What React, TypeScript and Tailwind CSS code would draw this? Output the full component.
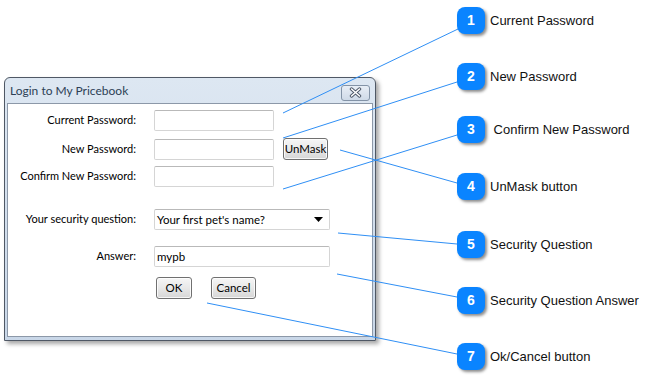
import type { ReactNode } from "react";

const UI = "font-['Lato','Noto_Sans',sans-serif]";

const callouts = [
  { n: 1, text: "Current Password", mt: "mt-[7px]" },
  { n: 2, text: "New Password", mt: "mt-[29px]" },
  { n: 3, text: " Confirm New Password", mt: "mt-[26px]" },
  { n: 4, text: "UnMask button", mt: "mt-[30px]" },
  { n: 5, text: "Security Question", mt: "mt-[31px]" },
  { n: 6, text: "Security Question Answer", mt: "mt-[29px]" },
  { n: 7, text: "Ok/Cancel button", mt: "mt-[29px]" },
];

// leader lines: [x1, y1, x2, y2]
const lines = [
  [283, 113, 458, 29],
  [283, 138, 457, 82],
  [283, 189, 457, 135],
  [340, 150, 457, 183],
  [338, 233, 457, 244],
  [337, 274, 457, 297],
  [207, 303, 457, 354],
];

function Field({ w = "w-[120px]", children }: { w?: string; children?: ReactNode }) {
  return (
    <div
      className={`${w} flex h-[21px] items-center rounded-[2px] border border-[#d5d5d5] border-t-[#b9b9b9] bg-white px-[2px] text-[11.5px] text-black`}
    >
      {children}
    </div>
  );
}

function WinButton({ w, children }: { w: string; children: ReactNode }) {
  return (
    <div
      className={`${w} flex h-[22px] items-center justify-center rounded-[3px] border border-[#707070] bg-gradient-to-b from-[#f6f6f6] via-[#e8e8e8] to-[#d6d6d6] text-[11.5px] text-black shadow-[inset_0_0_0_1px_rgba(255,255,255,0.8)]`}
    >
      {children}
    </div>
  );
}

function Row({ label, mt, children }: { label: string; mt: string; children: ReactNode }) {
  return (
    <div className={`${mt} flex items-center`}>
      <div className="w-[128px] text-right text-[11px] text-black">{label}</div>
      <div className="ml-[18px] flex items-center gap-[9px]">{children}</div>
    </div>
  );
}

function LoginWindow() {
  return (
    <div className="flex h-[264px] w-[372px] flex-col rounded-t-[6px] border border-[#4f5865] bg-gradient-to-b from-[#dde7f2] to-[#c9d7e8] shadow-[3px_3px_4px_rgba(0,0,0,0.35)]">
      <div className="flex h-[25px] items-center justify-between pl-[5px] pr-[5px]">
        <span className={`${UI} text-[12px] text-[#2d3f55]`}>Login to My Pricebook</span>
        <div className="mt-[4px] flex h-[16px] w-[29px] items-center justify-center rounded-[3px] border border-[#8393a7] bg-gradient-to-b from-[#e8eef6] to-[#cfdae8]">
          <svg width="13" height="11" viewBox="0 0 13 11">
            <path d="M2.5 2 L10.5 9 M10.5 2 L2.5 9" stroke="#4a5566" strokeWidth="3.4" strokeLinecap="round" />
            <path d="M2.5 2 L10.5 9 M10.5 2 L2.5 9" stroke="#ffffff" strokeWidth="1.6" strokeLinecap="round" />
          </svg>
        </div>
      </div>
      <div className={`${UI} mx-[2px] mb-[3px] flex-1 border border-[#8c98a8] bg-white`}>
        <Row label="Current Password:" mt="mt-[6px]">
          <Field />
        </Row>
        <Row label="New Password:" mt="mt-[7px]">
          <Field />
          <WinButton w="w-[45px]">UnMask</WinButton>
        </Row>
        <Row label="Confirm New Password:" mt="mt-[6px]">
          <Field />
        </Row>
        <Row label="Your security question:" mt="mt-[22px]">
          <Field w="w-[176px]">
            <span className="flex-1">Your first pet's name?</span>
            <svg width="9" height="5" viewBox="0 0 9 5" className="mr-[4px]">
              <path d="M0 0 H9 L4.5 5 Z" fill="#000" />
            </svg>
          </Field>
        </Row>
        <Row label="Answer:" mt="mt-[16px]">
          <Field w="w-[176px]">mypb</Field>
        </Row>
        <div className="ml-[148px] mt-[10px] flex gap-[19px]">
          <WinButton w="w-[36px]">OK</WinButton>
          <WinButton w="w-[45px]">Cancel</WinButton>
        </div>
      </div>
    </div>
  );
}

export default function App() {
  return (
    <div className="relative h-[382px] w-[656px] overflow-hidden bg-white">
      <div className="flex">
        <div className="w-[457px] pl-[4px] pt-[77px]">
          <LoginWindow />
        </div>
        <div className="flex flex-col">
          {callouts.map((c) => (
            <div key={c.n} className={`${c.mt} relative z-10 flex items-center`}>
              <div className="flex h-[27px] w-[28px] items-center justify-center rounded-[8px] bg-[#0a84ff] font-['Liberation_Sans',Arial,sans-serif] text-[14px] font-bold text-white shadow-[2px_2px_3px_rgba(0,0,0,0.45)]">
                {c.n}
              </div>
              <span className="ml-[5px] whitespace-pre font-['Liberation_Sans',Arial,sans-serif] text-[13px] text-[#111]">
                {c.text}
              </span>
            </div>
          ))}
        </div>
      </div>
      <svg className="pointer-events-none absolute left-0 top-0" width="656" height="382">
        {lines.map(([x1, y1, x2, y2], i) => (
          <line key={i} x1={x1} y1={y1} x2={x2} y2={y2} stroke="#2f8ff5" strokeWidth="1" />
        ))}
      </svg>
    </div>
  );
}
